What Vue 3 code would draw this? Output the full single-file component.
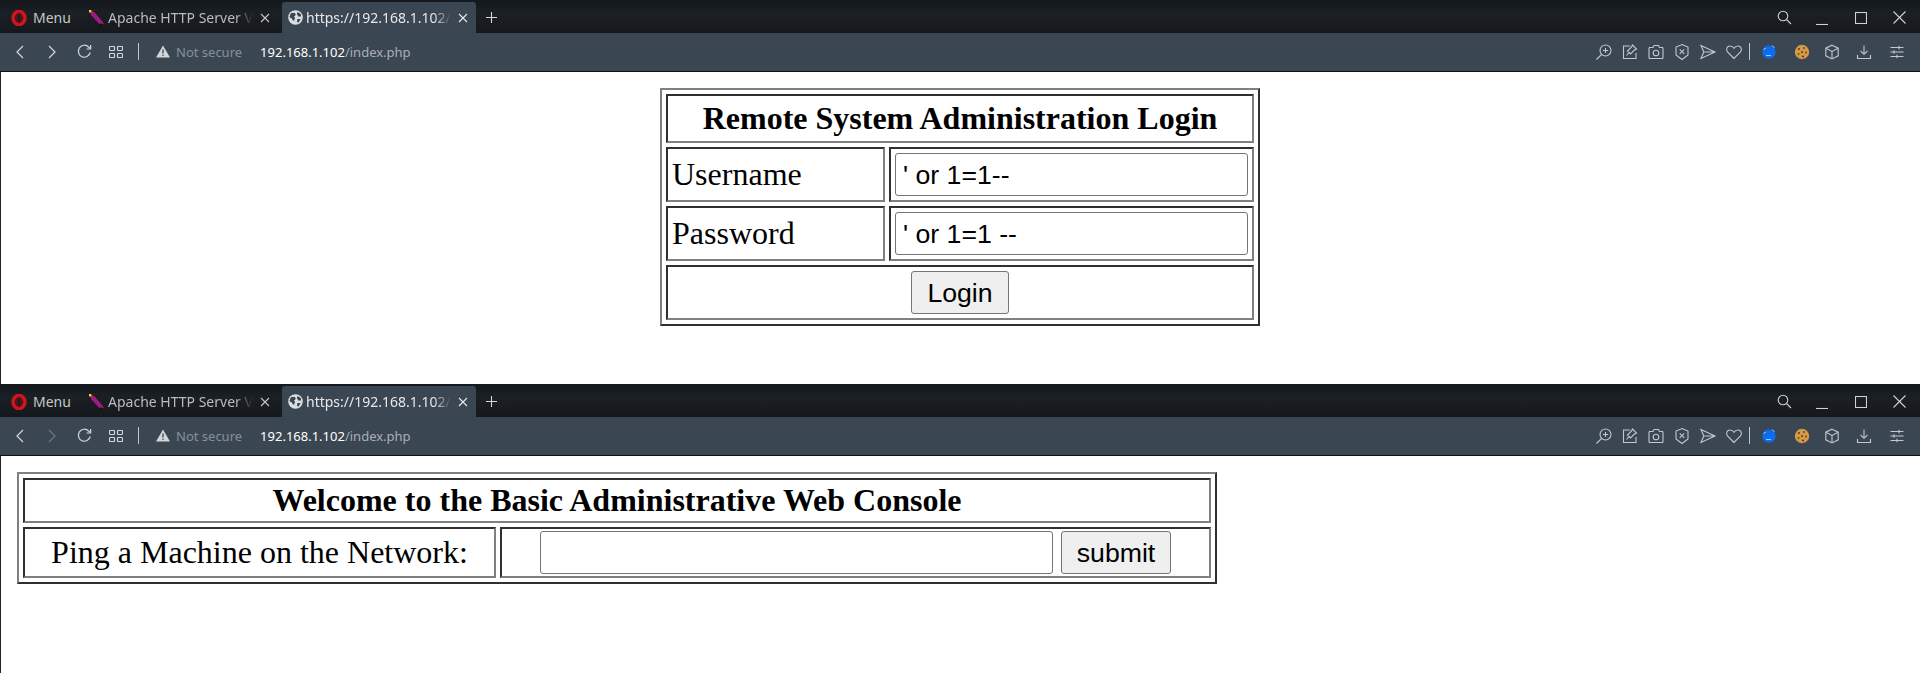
<script setup>
const windows = [
  { id: 'login', forwardDim: false },
  { id: 'console', forwardDim: true }
]
</script>

<template>
  <div class="desktop">
    <section v-for="win in windows" :key="win.id" class="window" :class="'window-' + win.id">
      <header class="tabbar">
        <div class="menu">
          <svg class="opera" width="16" height="16" viewBox="0 0 16 16">
            <ellipse cx="8" cy="8" rx="5.900" ry="6.500" fill="none" stroke="#d4141c" stroke-width="3.600" />
            <ellipse cx="8" cy="8" rx="2.200" ry="5.200" fill="none" stroke="#8f0d14" stroke-width="1" />
          </svg>
          <span>Menu</span>
        </div>
        <div class="tab tab-idle">
          <svg class="fav" width="16" height="16" viewBox="0 0 16 16">
            <path d="M1 1 L5 2 L13 11 L15.500 15.500 L10.500 14 L2.500 5.500 Z" fill="#d3105a" />
            <path d="M3.500 3.500 L13 14" stroke="#5b2bd0" stroke-width="1.400" />
            <path d="M11 14 L15 15.500" stroke="#111" stroke-width="1.400" />
            <rect x="0" y="0" width="2.400" height="2.400" fill="#f4d22e" />
          </svg>
          <span class="tab-title">Apache HTTP Server Version</span>
          <svg class="tab-x" width="10" height="10" viewBox="0 0 10 10"><path d="M1 1 9 9M9 1 1 9" /></svg>
        </div>
        <div class="tab tab-active">
          <svg class="fav" width="15" height="15" viewBox="0 0 16 16">
            <circle cx="8" cy="8" r="7.800" fill="#dcdfe2" />
            <path d="M3 3.500 7 3 8.500 5 6.500 7 7.500 9 6 12 4 9 1.500 7.500ZM10 2 13.500 4 14 7 11 7 9.500 4.500ZM10 9.500 13.500 9.500 11.500 13 9.500 13Z" fill="#3b4653" />
          </svg>
          <span class="tab-title">https://192.168.1.102/index.php</span>
          <svg class="tab-x" width="10" height="10" viewBox="0 0 10 10"><path d="M1 1 9 9M9 1 1 9" /></svg>
        </div>
        <svg class="plus" width="11" height="11" viewBox="0 0 11 11"><path d="M5.500 0V11M0 5.500H11" /></svg>
        <div class="window-controls">
          <svg class="ctl ctl-search" width="15" height="15" viewBox="0 0 15 15"><circle cx="6" cy="6" r="4.800" /><path d="M9.500 9.500 14 14" /></svg>
          <svg class="ctl ctl-min" width="12" height="12" viewBox="0 0 12 12"><path d="M0 11.500H12" /></svg>
          <svg class="ctl ctl-max" width="12" height="12" viewBox="0 0 12 12"><rect x=".5" y=".5" width="11" height="11" /></svg>
          <svg class="ctl ctl-close" width="13" height="13" viewBox="0 0 13 13"><path d="M.5.5 12.500 12.500M12.500.5 .5 12.500" /></svg>
        </div>
      </header>

      <nav class="toolbar">
        <svg class="nav nav-back" width="10" height="14" viewBox="0 0 10 14"><path d="M8 1 2 7l6 6" /></svg>
        <svg class="nav nav-fwd" :class="{ dim: win.forwardDim }" width="10" height="14" viewBox="0 0 10 14"><path d="M2 1l6 6-6 6" /></svg>
        <svg class="nav nav-reload" width="15" height="15" viewBox="0 0 15 15"><path d="M13.200 8.500A6 6 0 1 1 11.600 3L13.500 4.600" /><path d="M13.600 1v4h-4" /></svg>
        <svg class="nav nav-grid" width="14" height="12" viewBox="0 0 14 12"><rect x=".5" y=".5" width="5" height="4" rx=".8" /><rect x="8.500" y=".5" width="5" height="4" rx=".8" /><rect x=".5" y="7.500" width="5" height="4" rx=".8" /><rect x="8.500" y="7.500" width="5" height="4" rx=".8" /></svg>
        <span class="divider divider-left"></span>
        <svg class="warn" width="14" height="13" viewBox="0 0 14 13"><path d="M7 0.500 14 12.500H0Z" fill="#d2d5d8" /><path d="M7 4.500V8.500M7 9.700V11" stroke="#3b4653" stroke-width="1.300" /></svg>
        <span class="not-secure">Not secure</span>
        <span class="url"><span class="host">192.168.1.102</span>/index.php</span>

        <div class="tools">
          <svg class="tool" width="18" height="18" viewBox="0 0 18 18"><circle cx="10.500" cy="7.500" r="5.500" /><path d="M6.500 11.500 1.500 16.500M10.500 5v5M8 7.500h5" /></svg>
          <svg class="tool" width="18" height="18" viewBox="0 0 18 18"><path d="M9 3H2.500v12.500h12.500V10" /><path d="M5.500 12.500 8 9.500 6.500 8l4-4 1-2 4 4-2 1-4 4-1.500-1.500" /></svg>
          <svg class="tool" width="18" height="18" viewBox="0 0 18 18"><path d="M2.500 4.500H6L7 2.500H11.500L12.500 4.500H15.500A1 1 0 0 1 16 5.500V14.500A1 1 0 0 1 15.500 15.500H2.500A1 1 0 0 1 2 14.500V5.500A1 1 0 0 1 2.500 4.500Z" /><circle cx="9" cy="10" r="2.800" /></svg>
          <svg class="tool" width="18" height="18" viewBox="0 0 18 18"><path d="M9 1.500 15 4V12L9 16.500 3 12V4Z" /><path d="M6.700 6.300 11.300 10.900M11.300 6.300 6.700 10.900" /></svg>
          <svg class="tool" width="18" height="18" viewBox="0 0 18 18"><path d="M2 2.500 16 9 2 15.500 4.800 9ZM4.800 9H16" /></svg>
          <svg class="tool" width="18" height="18" viewBox="0 0 18 18"><path d="M9 15.500 2.500 9C.5 6.500 2 3 5 3c2 0 3.200 1 4 2.300C9.800 4 11 3 13 3c3 0 4.500 3.500 2.500 6Z" /></svg>
          <span class="divider divider-right"></span>
          <svg class="ext ext-blue" width="16" height="16" viewBox="0 0 16 16">
            <circle cx="8" cy="8" r="6.600" fill="#0a6cf0" />
            <path d="M2.500 5.500 5 4M11 1.800 13.500 3.500M5 11.500H10" stroke="#a8c8f4" stroke-width="1" fill="none" />
          </svg>
          <svg class="ext ext-cookie" width="16" height="16" viewBox="0 0 16 16">
            <circle cx="8" cy="8" r="7.200" fill="#d49a4c" />
            <circle cx="5" cy="5" r="1.100" fill="#6f3d12" /><circle cx="10" cy="4" r="1" fill="#7a4516" /><circle cx="8" cy="8" r="1.100" fill="#6f3d12" /><circle cx="12" cy="8.500" r="1" fill="#7a4516" /><circle cx="4.500" cy="10" r="1" fill="#7a4516" /><circle cx="9" cy="12.500" r="1.100" fill="#6f3d12" />
          </svg>
          <svg class="tool tool-cube" width="16" height="16" viewBox="0 0 16 16"><path d="M8 1.200 14.200 4.200V11.800L8 15 1.800 11.800V4.200Z" /><path d="M1.800 4.200 8 7.500 14.200 4.200M8 7.500V15" /></svg>
          <svg class="tool tool-down" width="16" height="16" viewBox="0 0 16 16"><path d="M8 1.500V10M4.500 6.800 8 10.300 11.500 6.800" /><path d="M1.500 11V14.500H14.500V11" /></svg>
          <svg class="tool tool-sliders" width="16" height="16" viewBox="0 0 16 16"><path d="M1.500 3.500H14.500M1.500 8H14.500M1.500 12.500H14.500M10 1.800V5.200M5 6.300V9.700M8 10.800V14.200" /></svg>
        </div>
      </nav>

      <main class="page">
        <div v-if="win.id === 'login'" class="center">
          <table class="form-table login-table">
            <tbody>
              <tr><th colspan="2">Remote System Administration Login</th></tr>
              <tr>
                <td class="label-cell">Username</td>
                <td><input class="field login-field" type="text" value="' or 1=1--" /></td>
              </tr>
              <tr>
                <td class="label-cell">Password</td>
                <td><input class="field login-field" type="text" value="' or 1=1 --" /></td>
              </tr>
              <tr><td colspan="2" class="centered"><button class="btn" type="button">Login</button></td></tr>
            </tbody>
          </table>
        </div>
        <table v-else class="form-table console-table">
          <tbody>
            <tr><th colspan="2">Welcome to the Basic Administrative Web Console</th></tr>
            <tr>
              <td class="centered ping-cell">Ping a Machine on the Network:</td>
              <td class="centered"><input class="field ping-field" type="text" /> <button class="btn" type="button">submit</button></td>
            </tr>
          </tbody>
        </table>
      </main>
    </section>
  </div>
</template>

<style>
html, body { margin: 0; padding: 0; background: #fff; overflow: hidden; }
</style>

<style scoped>
.desktop { display: flex; flex-direction: column; height: 673px; overflow: hidden; font-family: "Noto Sans", "Open Sans", sans-serif; }
.window { display: flex; flex-direction: column; }
.window-login { height: 384px; }
.window-console { flex: 1; min-height: 0; }

.tabbar { height: 33px; box-sizing: border-box; padding-top: 2px; display: flex; align-items: stretch; background: linear-gradient(#14171b, #1b2025 40%, #15181c); color: #c9ccd0; font-size: 14px; }
.menu { width: 82px; padding-left: 11px; box-sizing: border-box; display: flex; align-items: center; gap: 6px; color: #c3c6ca; }
.tab { display: flex; align-items: center; box-sizing: border-box; }
.tab-idle { width: 200px; padding-left: 7px; color: #b9bcc0; }
.tab-active { width: 194px; padding-left: 6px; background: #3b4653; border-radius: 3px 3px 0 0; color: #e6e8ea; }
.fav { flex: none; margin-right: 3px; }
.tab-title { display: block; white-space: nowrap; overflow: hidden; flex: 1; min-width: 0; -webkit-mask-image: linear-gradient(90deg, #000 88%, transparent); mask-image: linear-gradient(90deg, #000 88%, transparent); }
.tab-x { flex: none; fill: none; stroke: #c3c6ca; stroke-width: 1.100; }
.tab-idle .tab-x { margin: 0 12px 0 7px; }
.tab-active .tab-x { margin: 0 8px 0 7px; stroke: #e6e8ea; }
.plus { align-self: center; margin-left: 10px; fill: none; stroke: #d5d7da; stroke-width: 1.100; }
.window-controls { margin-left: auto; display: flex; align-items: center; }
.ctl { fill: none; stroke: #cfd2d5; stroke-width: 1.100; }
.ctl-search { margin-right: 24px; }
.ctl-min { margin-right: 27px; margin-top: 2px; }
.ctl-max { margin-right: 26px; }
.ctl-close { margin-right: 14px; }

.toolbar { height: 39px; box-sizing: border-box; border-bottom: 1px solid #101216; background: #3b4653; display: flex; align-items: center; padding-bottom: 1px; font-size: 13px; }
.nav { flex: none; fill: none; stroke: #d3d6d9; stroke-width: 1.200; }
.nav.dim { stroke: #6f7984; }
.nav-back { margin-left: 15px; }
.nav-fwd { margin-left: 22px; }
.nav-reload { margin-left: 20px; }
.nav-grid { margin-left: 17px; }
.divider { flex: none; display: block; width: 1px; height: 17px; background: #c3c7cb; }
.divider-left { margin-left: 15px; }
.warn { flex: none; margin-left: 17px; }
.not-secure { margin-left: 6px; color: #87909a; white-space: nowrap; }
.url { margin-left: 18px; color: #a8afb6; white-space: nowrap; }
.host { color: #fff; }
.tools { margin-left: auto; display: flex; align-items: center; padding-right: 15px; }
.tool { flex: none; fill: none; stroke: #c3c7cb; stroke-width: 1.100; margin-left: 8px; }
.tool:first-child { margin-left: 0; }
.divider-right { margin: 0 11px 0 6px; }
.ext { flex: none; }
.ext-cookie { margin-left: 17px; }
.tool-cube { margin-left: 14px; }
.tool-down { margin-left: 16px; }
.tool-sliders { margin-left: 17px; }

.page { flex: 1; min-height: 0; background: #fff; border-left: 1px solid #222; padding: 16px 16px 0 15px; overflow: hidden; font-family: "Liberation Serif", serif; font-size: 32px; color: #000; }
.window-console .page { padding-left: 16px; }
.center { display: flex; justify-content: center; }

.form-table { width: 600px; box-sizing: border-box; border-collapse: separate; border-spacing: 4px; border: 2px solid; border-color: #808080 #2f2f2f #2f2f2f #808080; }
.console-table { width: 1200px; }
.form-table th, .form-table td { border: 2px solid; border-color: #2f2f2f #808080 #808080 #2f2f2f; font-weight: normal; }
.form-table th { font-weight: bold; text-align: center; }
.login-table th, .login-table td { padding: 4px; }
.console-table th, .console-table td { padding: 2px; }
.login-table .label-cell { width: 207px; }
.ping-cell { width: 465px; }
.centered { text-align: center; }

.field, .btn { font-family: "Liberation Sans", Arial, sans-serif; font-size: 26.67px; color: #000; box-sizing: border-box; height: 43px; vertical-align: middle; margin: 0; }
.field { border: 1px solid #767676; border-radius: 3px; padding: 2px 7px 0; background: #fff; }
.login-field { width: 353px; display: block; }
.ping-field { width: 513px; }
.btn { border: 1px solid #767676; border-radius: 3px; background: #efefef; padding: 2px 15px 0; }
</style>
